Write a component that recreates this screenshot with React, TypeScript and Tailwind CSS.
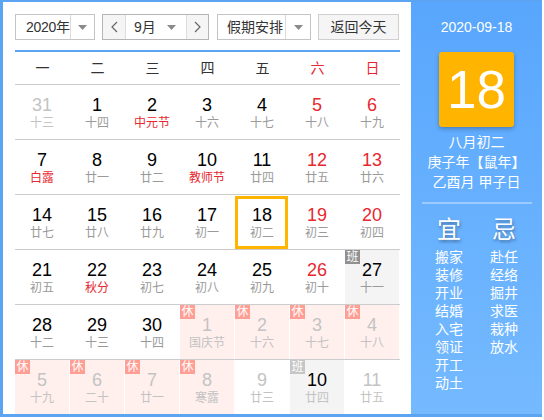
import React from "react";

type Cell = {
  d: number;
  l: string;
  numRed?: boolean;
  lunarRed?: boolean;
  faded?: boolean;
  lunarFaded?: boolean;
  rest?: boolean;
  work?: "dark" | "light";
  selected?: boolean;
};

const rows: Cell[][] = [
  [
    { d: 31, l: "十三", faded: true },
    { d: 1, l: "十四" },
    { d: 2, l: "中元节", lunarRed: true },
    { d: 3, l: "十六" },
    { d: 4, l: "十七" },
    { d: 5, l: "十八", numRed: true },
    { d: 6, l: "十九", numRed: true },
  ],
  [
    { d: 7, l: "白露", lunarRed: true },
    { d: 8, l: "廿一" },
    { d: 9, l: "廿二" },
    { d: 10, l: "教师节", lunarRed: true },
    { d: 11, l: "廿四" },
    { d: 12, l: "廿五", numRed: true },
    { d: 13, l: "廿六", numRed: true },
  ],
  [
    { d: 14, l: "廿七" },
    { d: 15, l: "廿八" },
    { d: 16, l: "廿九" },
    { d: 17, l: "初一" },
    { d: 18, l: "初二", selected: true },
    { d: 19, l: "初三", numRed: true },
    { d: 20, l: "初四", numRed: true },
  ],
  [
    { d: 21, l: "初五" },
    { d: 22, l: "秋分", lunarRed: true },
    { d: 23, l: "初七" },
    { d: 24, l: "初八" },
    { d: 25, l: "初九" },
    { d: 26, l: "初十", numRed: true },
    { d: 27, l: "十一", work: "dark" },
  ],
  [
    { d: 28, l: "十二" },
    { d: 29, l: "十三" },
    { d: 30, l: "十四" },
    { d: 1, l: "国庆节", faded: true, rest: true },
    { d: 2, l: "十六", faded: true, rest: true },
    { d: 3, l: "十七", faded: true, rest: true },
    { d: 4, l: "十八", faded: true, rest: true },
  ],
  [
    { d: 5, l: "十九", faded: true, rest: true },
    { d: 6, l: "二十", faded: true, rest: true },
    { d: 7, l: "廿一", faded: true, rest: true },
    { d: 8, l: "寒露", faded: true, rest: true },
    { d: 9, l: "廿三", faded: true },
    { d: 10, l: "廿四", lunarFaded: true, work: "light" },
    { d: 11, l: "廿五", faded: true },
  ],
];

const weekdays = ["一", "二", "三", "四", "五", "六", "日"];

function Caret() {
  return (
    <svg width="9" height="5" viewBox="0 0 9 5" className="block">
      <path d="M0 0 L9 0 L4.5 5 Z" fill="#8a8a8a" />
    </svg>
  );
}

function Chevron({ dir }: { dir: "l" | "r" }) {
  return (
    <svg width="7" height="12" viewBox="0 0 7 12" className="block">
      <path
        d={dir === "l" ? "M6 1 L1 6 L6 11" : "M1 1 L6 6 L1 11"}
        fill="none"
        stroke="#666"
        strokeWidth="1.2"
      />
    </svg>
  );
}

function DayCell({ c }: { c: Cell }) {
  let numColor = "text-black";
  if (c.faded) numColor = "text-[#c3c3c3]";
  else if (c.numRed) numColor = "text-[#e8282f]";
  let lunarColor = "text-[#9a9a9a]";
  if (c.faded || c.lunarFaded) lunarColor = "text-[#c3c3c3]";
  else if (c.lunarRed) lunarColor = "text-[#e8282f]";

  let bg = "";
  if (c.rest) bg = "bg-[#fff0ee]";
  else if (c.work) bg = "bg-[#f4f4f4]";

  return (
    <div className="relative h-[54px] w-[55px] pr-[1px]">
      <div className={`relative h-full w-full ${bg}`}>
        {c.rest && (
          <div className="absolute left-0 top-0 flex h-[14px] w-[15px] items-center justify-center bg-[#ff9e94] text-[12px] leading-none text-white">
            休
          </div>
        )}
        {c.work && (
          <div
            className={`absolute left-0 top-0 flex h-[14px] w-[15px] items-center justify-center text-[12px] leading-none text-white ${
              c.work === "dark" ? "bg-[#919191]" : "bg-[#c6c6c6]"
            }`}
          >
            班
          </div>
        )}
        {c.selected && (
          <div className="absolute left-0 top-[1px] h-[53px] w-[53px] border-[3px] border-[#ffb400]" />
        )}
        <div className="flex flex-col items-center pt-[10px]">
          <div
            className={`text-[18px] leading-[20px] ${numColor}`}
            style={{ fontFamily: '"Liberation Sans", Arial, sans-serif' }}
          >
            {c.d}
          </div>
          <div className={`text-[12px] leading-[16px] ${lunarColor}`}>{c.l}</div>
        </div>
      </div>
    </div>
  );
}

export default function App() {
  const yi = ["搬家", "装修", "开业", "结婚", "入宅", "领证", "开工", "动土"];
  const ji = ["赴任", "经络", "掘井", "求医", "栽种", "放水"];
  return (
    <div
      className="flex h-[417px] w-[542px] border-b-[3px] border-l-[3px] border-t-[2px] border-[#5aa4f2] bg-white"
      style={{ fontFamily: '"Liberation Sans", "Noto Sans CJK SC", sans-serif' }}
    >
      {/* Left calendar */}
      <div className="flex w-[408px] flex-col pl-[12px] pr-[11px] pt-[12px]">
        {/* Controls */}
        <div className="flex h-[26px] gap-[7px] whitespace-nowrap text-[14px] text-[#333]">
          <div className="flex h-[26px] w-[80px] border border-[#c4c4c4]">
            <div className="flex min-w-0 flex-1 items-center pl-[10px] tracking-[-0.3px]">2020年</div>
            <div className="flex w-[24px] shrink-0 items-center justify-center border-l border-[#dcdcdc]">
              <Caret />
            </div>
          </div>
          <div className="flex h-[26px] w-[107px] border border-[#b5b5b5]">
            <div className="flex w-[22px] items-center justify-center bg-[#f5f5f5]">
              <Chevron dir="l" />
            </div>
            <div className="flex w-[62px] items-center border-x border-[#dcdcdc] bg-white pl-[8px]">
              <span className="flex-1">9月</span>
              <span className="pr-[10px]">
                <Caret />
              </span>
            </div>
            <div className="flex flex-1 items-center justify-center bg-[#f5f5f5]">
              <Chevron dir="r" />
            </div>
          </div>
          <div className="ml-[1px] flex h-[26px] w-[94px] border border-[#c4c4c4]">
            <div className="flex min-w-0 flex-1 items-center pl-[9px]">假期安排</div>
            <div className="flex w-[25px] shrink-0 items-center justify-center border-l border-[#dcdcdc]">
              <Caret />
            </div>
          </div>
          <div className="flex h-[26px] w-[81px] items-center justify-center border border-[#cfcfcf] bg-[#f5f5f5]">
            返回今天
          </div>
        </div>
        <div className="mt-[10px] h-[2px] w-[385px] bg-[#5aa4f2]" />
        {/* Weekday header */}
        <div className="flex h-[32px] w-[385px]">
          {weekdays.map((w, i) => (
            <div
              key={w}
              className={`flex w-[55px] items-center justify-center text-[14px] ${
                i >= 5 ? "text-[#e8282f]" : "text-[#333]"
              }`}
            >
              {w}
            </div>
          ))}
        </div>
        {/* Grid */}
        <div className="flex w-[385px] flex-col">
          {rows.map((r, ri) => (
            <div key={ri} className="flex border-t border-[#cccccc]">
              {r.map((c, ci) => (
                <DayCell key={ci} c={c} />
              ))}
            </div>
          ))}
        </div>
      </div>

      {/* Right panel */}
      <div className="flex w-[131px] flex-col items-center bg-linear-to-b from-[#58a6fd] to-[#75baff] pt-[15px] text-white">
        <div
          className="text-[14px] leading-[20px]"
          style={{ fontFamily: '"Liberation Sans", Arial, sans-serif' }}
        >
          2020-09-18
        </div>
        <div className="mt-[15px] flex h-[75px] w-[75px] items-center justify-center rounded-[3px] bg-[#ffb400] shadow-[0_2px_4px_rgba(0,0,0,0.25)]">
          <span
            className="text-[53px] leading-none"
            style={{ fontFamily: '"Liberation Sans", Arial, sans-serif' }}
          >
            18
          </span>
        </div>
        <div className="mt-[5px] flex flex-col items-center text-[14px] leading-[20px]">
          <div>八月初二</div>
          <div>庚子年【鼠年】</div>
          <div>乙酉月 甲子日</div>
        </div>
        <div className="mt-[10px] h-[2px] w-[110px] bg-[#9ccbff]" />
        <div className="mt-[11px] flex gap-[27px]">
          <div className="flex w-[28px] flex-col items-center">
            <div className="text-[24px] leading-[30px] [text-shadow:1px_2px_3px_rgba(0,0,0,0.35)]">宜</div>
            <div className="mt-[3px] flex flex-col text-[14px] leading-[18px]">
              {yi.map((t) => (
                <div key={t}>{t}</div>
              ))}
            </div>
          </div>
          <div className="flex w-[28px] flex-col items-center">
            <div className="text-[24px] leading-[30px] [text-shadow:1px_2px_3px_rgba(0,0,0,0.35)]">忌</div>
            <div className="mt-[3px] flex flex-col text-[14px] leading-[18px]">
              {ji.map((t) => (
                <div key={t}>{t}</div>
              ))}
            </div>
          </div>
        </div>
      </div>
    </div>
  );
}
